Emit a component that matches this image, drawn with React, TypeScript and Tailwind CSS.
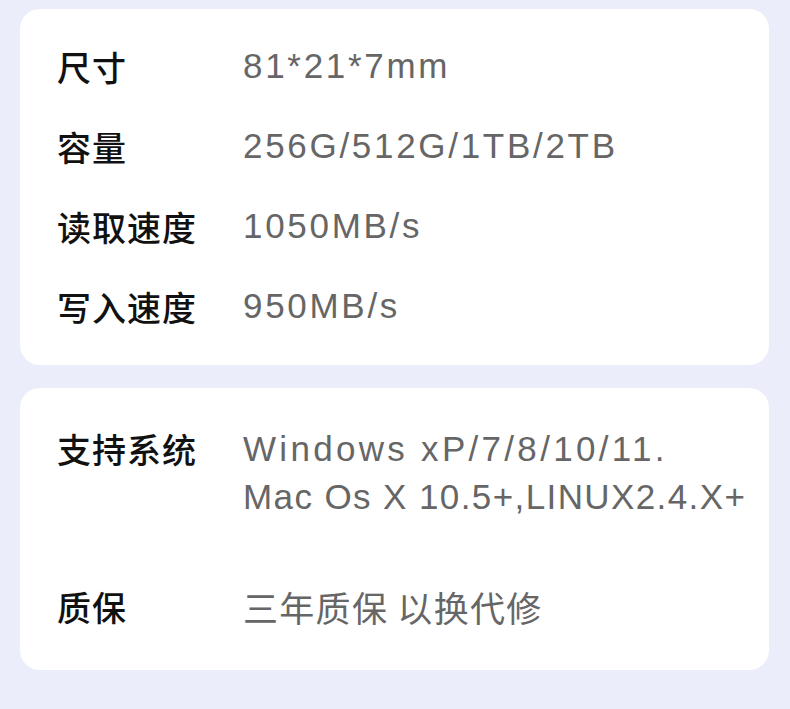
const cjk = "font-['Noto_Sans_CJK_SC',sans-serif]";
const latin = "font-['Liberation_Sans','Noto_Sans_CJK_SC',sans-serif]";

const specs = [
  { label: '尺寸', value: '81*21*7mm' },
  { label: '容量', value: '256G/512G/1TB/2TB' },
  { label: '读取速度', value: '1050MB/s' },
  { label: '写入速度', value: '950MB/s' },
];

export default function App() {
  return (
    <div className="min-h-[709px] w-[790px] bg-[#ebeefa] pt-[9px]">
      {/* basic specs */}
      <div className="ml-[20px] w-[749px] rounded-[20px] bg-white pl-[37px] pt-[17px] pb-[19px]">
        {specs.map((s) => (
          <div key={s.label} className="flex h-[80px] items-center">
            <span className={`w-[186px] shrink-0 text-[34px] font-medium tracking-[1px] text-[#111] ${cjk}`}>
              {s.label}
            </span>
            <span className={`whitespace-nowrap text-[35px] tracking-[2.7px] text-[#666] ${latin}`}>{s.value}</span>
          </div>
        ))}
      </div>

      {/* system & warranty */}
      <div className="ml-[20px] mt-[23px] flex w-[749px] flex-col gap-[62px] rounded-[20px] bg-white pt-[37px] pb-[39px] pl-[37px]">
        <div className="flex leading-[48px]">
          <span className={`w-[186px] shrink-0 text-[34px] font-medium tracking-[1px] text-[#111] ${cjk}`}>
            支持系统
          </span>
          <div className={`whitespace-nowrap text-[35px] text-[#666] ${latin}`}>
            <div className="tracking-[3.3px]">Windows xP/7/8/10/11.</div>
            <div className="tracking-[1.4px]">Mac Os X 10.5+,LINUX2.4.X+</div>
          </div>
        </div>
        <div className="flex leading-[48px]">
          <span className={`w-[186px] shrink-0 text-[34px] font-medium tracking-[1px] text-[#111] ${cjk}`}>
            质保
          </span>
          <span className={`whitespace-nowrap text-[35px] tracking-[1.3px] text-[#666] ${cjk}`}>三年质保 以换代修</span>
        </div>
      </div>
    </div>
  );
}
